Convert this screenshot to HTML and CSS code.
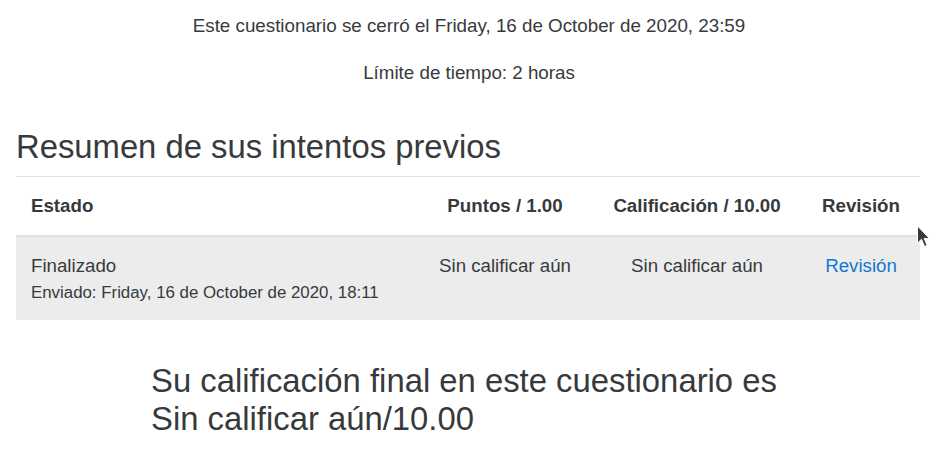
FILE: index.html
```html
<!DOCTYPE html>
<html lang="es">
<head>
<meta charset="utf-8">
<title>Resumen de sus intentos previos</title>
<link rel="stylesheet" href="styles.css">
</head>
<body>
<div class="page">
  <div class="quizinfo">
    <p class="info">Este cuestionario se cerró el Friday, 16 de October de 2020, 23:59</p>
    <p class="info last">Límite de tiempo: 2 horas</p>
  </div>
  <h2 class="summary-title">Resumen de sus intentos previos</h2>
  <table class="attempts">
    <thead>
      <tr>
        <th class="c-state">Estado</th>
        <th class="c-marks">Puntos / 1.00</th>
        <th class="c-grade">Calificación / 10.00</th>
        <th class="c-review">Revisión</th>
      </tr>
    </thead>
    <tbody>
      <tr class="hovered">
        <td class="c-state">Finalizado<span class="statedetails">Enviado: Friday, 16 de October de 2020, 18:11</span></td>
        <td class="c-marks">Sin calificar aún</td>
        <td class="c-grade">Sin calificar aún</td>
        <td class="c-review"><a href="#" class="review-link">Revisión</a></td>
      </tr>
    </tbody>
  </table>
  <div class="feedback">
    <h3 class="final-grade">Su calificación final en este cuestionario es Sin calificar aún/10.00</h3>
  </div>
</div>
<svg class="cursor" width="15" height="23" viewBox="0 0 15 23" aria-hidden="true">
  <path d="M1.5 1 L1.5 18 L5.5 14.3 L8.6 21.5 L11.2 20.4 L8.2 13.4 L13.4 13.4 Z" fill="#3a3a3a" stroke="#ffffff" stroke-width="1" stroke-linejoin="round"/>
</svg>
</body>
</html>
```
FILE: styles.css
```css
html, body {
  margin: 0;
  padding: 0;
  background: #ffffff;
}

body {
  font-family: "Liberation Sans", Arial, sans-serif;
  font-size: 18.7px;
  line-height: 28px;
  color: #373a3c;
}

.page {
  padding: 12px 16px 0 16px;
}

.quizinfo {
  text-align: center;
  font-size: 18.78px;
}

.info {
  margin: 0 0 19px 0;
}

.info.last {
  margin-bottom: 0;
}

.summary-title {
  font-size: 32.8px;
  font-weight: 400;
  line-height: 39px;
  margin: 40px 0 10px 0;
}

.attempts {
  width: 904px;
  border-collapse: collapse;
  border-top: 1px solid #dee2e6;
}

.attempts th,
.attempts td {
  padding: 15px 15px;
  vertical-align: top;
  text-align: center;
}

.attempts th {
  font-weight: 700;
  border-bottom: 2px solid #dee2e6;
}

.attempts .c-state {
  text-align: left;
  width: 372px;
}

.attempts .c-marks {
  width: 144px;
}

.attempts .c-grade {
  width: 180px;
}

.attempts .c-review {
  width: 88px;
}

.attempts tbody tr.hovered {
  background: #ececec;
}

.statedetails {
  display: block;
  font-size: 16.85px;
  line-height: 25px;
}

.review-link {
  color: #1177d1;
  text-decoration: none;
}

.feedback {
  max-width: 636px;
  margin: 42px auto 0 auto;
}

.final-grade {
  font-size: 32.85px;
  font-weight: 400;
  line-height: 38px;
  margin: 0;
}

.cursor {
  position: absolute;
  left: 916px;
  top: 225px;
}
```
